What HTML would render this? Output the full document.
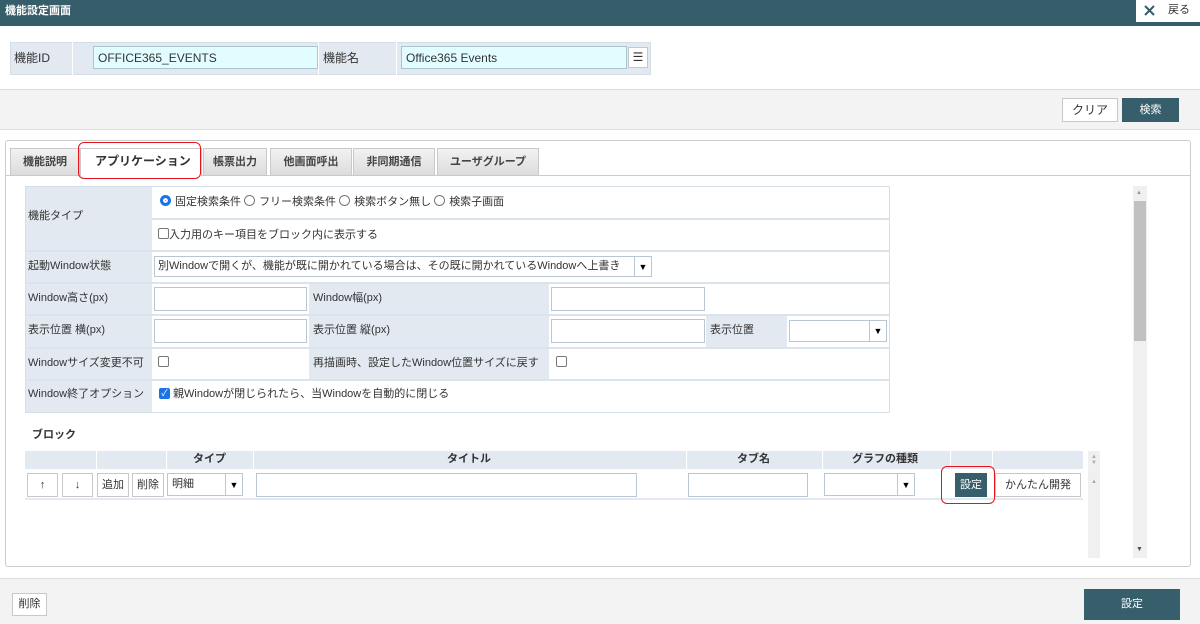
<!DOCTYPE html>
<html><head><meta charset="utf-8"><style>
*{box-sizing:border-box;margin:0;padding:0}
body{width:1200px;height:624px;position:relative;overflow:hidden;background:#fff;font-family:"Liberation Sans","Noto Sans CJK JP",sans-serif;font-size:12px;color:#333}
.a{position:absolute}
.hdr{left:0;top:0;width:1200px;height:26px;background:#365d6a}
.lbl{background:#e3e9f1}
.inp{background:#fff;border:1px solid #b9c6d3}
.cy{background:#e2fdff;border:1px solid #a9c6d0}
.btn{background:#fff;border:1px solid #c8c8c8;text-align:center;font-size:11px;color:#333}
.dk{background:#365e6b;color:#fff;text-align:center}
.t{white-space:nowrap;line-height:1}
.sel{background:#fff;border:1px solid #b9c6d3}
.arr{position:absolute;right:0;top:0;bottom:0;width:17px;border-left:1px solid #b9c6d3;font-size:9px;text-align:center;color:#000;display:flex;align-items:center;justify-content:center;background:#fff}
.tab{top:148px;height:28px;background:linear-gradient(#f2f2f2,#dcdcdc);border:1px solid #c9c9c9;font-weight:bold;font-size:11px;color:#444;text-align:center;line-height:26px}
.ln{background:#dbe3ec}
.rad{display:inline-block;width:11px;height:11px;border:1px solid #777;border-radius:50%;vertical-align:-1px;margin-right:4px}
.cb{display:inline-block;width:11px;height:11px;border:1px solid #777;border-radius:2px;vertical-align:-1px}
</style></head><body>
<div class="a hdr"></div>
<div class="a t" style="left:5px;top:6px;color:#fff;font-weight:bold;font-size:11px">機能設定画面</div>
<div class="a" style="left:1136px;top:0;width:64px;height:22px;background:#fff"></div>
<svg class="a" style="left:1144px;top:5px" width="11" height="11" viewBox="0 0 11 11"><path d="M1 1L10 10M10 1L1 10" stroke="#365d6a" stroke-width="2"/></svg>
<div class="a t" style="left:1168px;top:5px;font-size:11px;color:#333">戻る</div>

<div class="a lbl" style="left:10px;top:42px;width:641px;height:33px;border:1px solid #d5dde6"></div>
<div class="a" style="left:72px;top:42px;width:1px;height:33px;background:#fff"></div>
<div class="a t" style="left:14px;top:52px">機能ID</div>
<div class="a cy" style="left:93px;top:46px;width:225px;height:23px"></div>
<div class="a t" style="left:98px;top:52px">OFFICE365_EVENTS</div>
<div class="a" style="left:318px;top:42px;width:1px;height:33px;background:#fff"></div>
<div class="a t" style="left:323px;top:52px">機能名</div>
<div class="a" style="left:396px;top:42px;width:1px;height:33px;background:#fff"></div>
<div class="a cy" style="left:401px;top:46px;width:226px;height:23px"></div>
<div class="a t" style="left:406px;top:52px">Office365 Events</div>
<div class="a btn" style="left:628px;top:47px;width:20px;height:21px;font-size:12px;line-height:19px">☰</div>

<div class="a" style="left:0;top:89px;width:1200px;height:41px;background:#f3f3f3;border-top:1px solid #ddd;border-bottom:1px solid #ddd"></div>
<div class="a btn" style="left:1062px;top:98px;width:56px;height:24px;line-height:22px;font-size:12px">クリア</div>
<div class="a dk" style="left:1122px;top:98px;width:57px;height:24px;line-height:24px;font-size:11px">検索</div>

<div class="a" style="left:5px;top:140px;width:1186px;height:427px;border:1px solid #ccc;border-radius:3px;background:#fff"></div>
<div class="a" style="left:6px;top:175px;width:1184px;height:1px;background:#ccc"></div>
<div class="a tab" style="left:10px;width:70px">機能説明</div>
<div class="a" style="left:80px;top:148px;width:122px;height:28px;background:#fff;border:1px solid #c9c9c9;border-bottom:none"></div>
<div class="a t" style="left:95px;top:155px;font-weight:bold;font-size:12px;color:#333">アプリケーション</div>
<div class="a" style="left:78px;top:142px;width:123px;height:37px;border:1.5px solid #e3141d;border-radius:6px"></div>
<div class="a tab" style="left:203px;width:64px">帳票出力</div>
<div class="a tab" style="left:270px;width:82px">他画面呼出</div>
<div class="a tab" style="left:353px;width:82px">非同期通信</div>
<div class="a tab" style="left:437px;width:102px">ユーザグループ</div>

<div class="a" style="left:25px;top:186px;width:865px;height:227px;border:1px solid #d6dee8;background:#fff"></div>
<div class="a lbl" style="left:26px;top:187px;width:126px;height:225px"></div>
<div class="a lbl" style="left:309px;top:284px;width:240px;height:96px"></div>
<div class="a lbl" style="left:706px;top:316px;width:81px;height:32px"></div>
<div class="a ln" style="left:152px;top:218px;width:737px;height:2px"></div>
<div class="a ln" style="left:26px;top:250px;width:863px;height:2px"></div>
<div class="a ln" style="left:26px;top:282px;width:863px;height:2px"></div>
<div class="a ln" style="left:26px;top:314px;width:863px;height:2px"></div>
<div class="a ln" style="left:26px;top:347px;width:863px;height:2px"></div>
<div class="a ln" style="left:26px;top:379px;width:863px;height:2px"></div>
<div class="a t" style="left:28px;top:211px;font-size:11px">機能タイプ</div>
<div class="a t" style="left:160px;top:195px;font-size:11px"><span class="rad" style="border:3px solid #1a73e8;background:#1a73e8;box-shadow:inset 0 0 0 2px #fff"></span>固定検索条件 <span class="rad"></span>フリー検索条件 <span class="rad"></span>検索ボタン無し <span class="rad"></span>検索子画面</div>
<div class="a t" style="left:158px;top:228px;font-size:11px"><span class="cb"></span>入力用のキー項目をブロック内に表示する</div>
<div class="a t" style="left:28px;top:261px;font-size:11px">起動Window状態</div>
<div class="a sel" style="left:154px;top:256px;width:498px;height:21px"><div class="arr">▼</div></div>
<div class="a t" style="left:158px;top:261px;font-size:11px">別Windowで開くが、機能が既に開かれている場合は、その既に開かれているWindowへ上書き</div>
<div class="a t" style="left:28px;top:293px;font-size:11px">Window高さ(px)</div>
<div class="a inp" style="left:154px;top:287px;width:153px;height:24px"></div>
<div class="a t" style="left:313px;top:293px;font-size:11px">Window幅(px)</div>
<div class="a inp" style="left:551px;top:287px;width:154px;height:24px"></div>
<div class="a t" style="left:28px;top:325px;font-size:11px">表示位置 横(px)</div>
<div class="a inp" style="left:154px;top:319px;width:153px;height:24px"></div>
<div class="a t" style="left:313px;top:325px;font-size:11px">表示位置 縦(px)</div>
<div class="a inp" style="left:551px;top:319px;width:154px;height:24px"></div>
<div class="a t" style="left:710px;top:325px;font-size:11px">表示位置</div>
<div class="a sel" style="left:789px;top:320px;width:98px;height:22px"><div class="arr">▼</div></div>
<div class="a t" style="left:28px;top:358px;font-size:11px">Windowサイズ変更不可</div>
<div class="a cb" style="left:158px;top:356px"></div>
<div class="a t" style="left:313px;top:358px;font-size:11px">再描画時、設定したWindow位置サイズに戻す</div>
<div class="a cb" style="left:556px;top:356px"></div>
<div class="a t" style="left:28px;top:389px;font-size:11px">Window終了オプション</div>
<div class="a cb" style="left:159px;top:388px;background:#1a73e8;border-color:#1a73e8;color:#fff;font-size:9px;line-height:9px;text-align:center">✓</div>
<div class="a t" style="left:173px;top:389px;font-size:11px">親Windowが閉じられたら、当Windowを自動的に閉じる</div>

<div class="a" style="left:1133px;top:186px;width:14px;height:372px;background:#f0f0f0"></div>
<div class="a" style="left:1134px;top:201px;width:12px;height:140px;background:#c1c1c1"></div>
<div class="a t" style="left:1136px;top:190px;font-size:6px;color:#999">▲</div>
<div class="a t" style="left:1136px;top:546px;font-size:7px;color:#555">▼</div>

<div class="a t" style="left:32px;top:430px;font-weight:bold;font-size:11px">ブロック</div>
<div class="a lbl" style="left:25px;top:451px;width:1058px;height:18px"></div>
<div class="a" style="left:25px;top:469px;width:1058px;height:31px;border-bottom:2px solid #e3e9f1"></div>
<div class="a" style="left:96px;top:451px;width:1px;height:47px;background:#fff"></div>
<div class="a" style="left:166px;top:451px;width:1px;height:18px;background:#fff"></div>
<div class="a" style="left:253px;top:451px;width:1px;height:47px;background:#fff"></div>
<div class="a" style="left:686px;top:451px;width:1px;height:18px;background:#fff"></div>
<div class="a" style="left:822px;top:451px;width:1px;height:18px;background:#fff"></div>
<div class="a" style="left:950px;top:451px;width:1px;height:18px;background:#fff"></div>
<div class="a" style="left:992px;top:451px;width:1px;height:18px;background:#fff"></div>
<div class="a t" style="left:193px;top:454px;font-weight:bold;font-size:11px">タイプ</div>
<div class="a t" style="left:447px;top:454px;font-weight:bold;font-size:11px">タイトル</div>
<div class="a t" style="left:737px;top:454px;font-weight:bold;font-size:11px">タブ名</div>
<div class="a t" style="left:852px;top:454px;font-weight:bold;font-size:11px">グラフの種類</div>
<div class="a btn" style="left:27px;top:473px;width:31px;height:24px;line-height:22px">↑</div>
<div class="a btn" style="left:62px;top:473px;width:31px;height:24px;line-height:22px">↓</div>
<div class="a btn" style="left:97px;top:473px;width:32px;height:24px;line-height:22px">追加</div>
<div class="a btn" style="left:132px;top:473px;width:32px;height:24px;line-height:22px">削除</div>
<div class="a sel" style="left:167px;top:473px;width:76px;height:23px"><div class="arr">▼</div></div>
<div class="a t" style="left:172px;top:479px;font-size:11px">明細</div>
<div class="a inp" style="left:256px;top:473px;width:381px;height:24px"></div>
<div class="a inp" style="left:688px;top:473px;width:120px;height:24px"></div>
<div class="a sel" style="left:824px;top:473px;width:91px;height:23px"><div class="arr">▼</div></div>
<div class="a dk" style="left:955px;top:473px;width:32px;height:24px;line-height:24px;font-size:11px">設定</div>
<div class="a" style="left:941px;top:466px;width:54px;height:38px;border:1.5px solid #e3141d;border-radius:6px"></div>
<div class="a btn" style="left:995px;top:473px;width:86px;height:24px;line-height:22px">かんたん開発</div>
<div class="a" style="left:1088px;top:451px;width:12px;height:107px;background:#f0f0f0"></div>
<div class="a t" style="left:1091px;top:454px;font-size:6px;color:#aaa">▲<br>▼</div>
<div class="a t" style="left:1091px;top:479px;font-size:6px;color:#aaa">▲</div>

<div class="a" style="left:0;top:578px;width:1200px;height:46px;background:#f3f3f3;border-top:1px solid #ddd"></div>
<div class="a btn" style="left:12px;top:593px;width:35px;height:23px;line-height:21px">削除</div>
<div class="a dk" style="left:1084px;top:589px;width:96px;height:31px;line-height:31px;font-size:11px">設定</div>
</body></html>
